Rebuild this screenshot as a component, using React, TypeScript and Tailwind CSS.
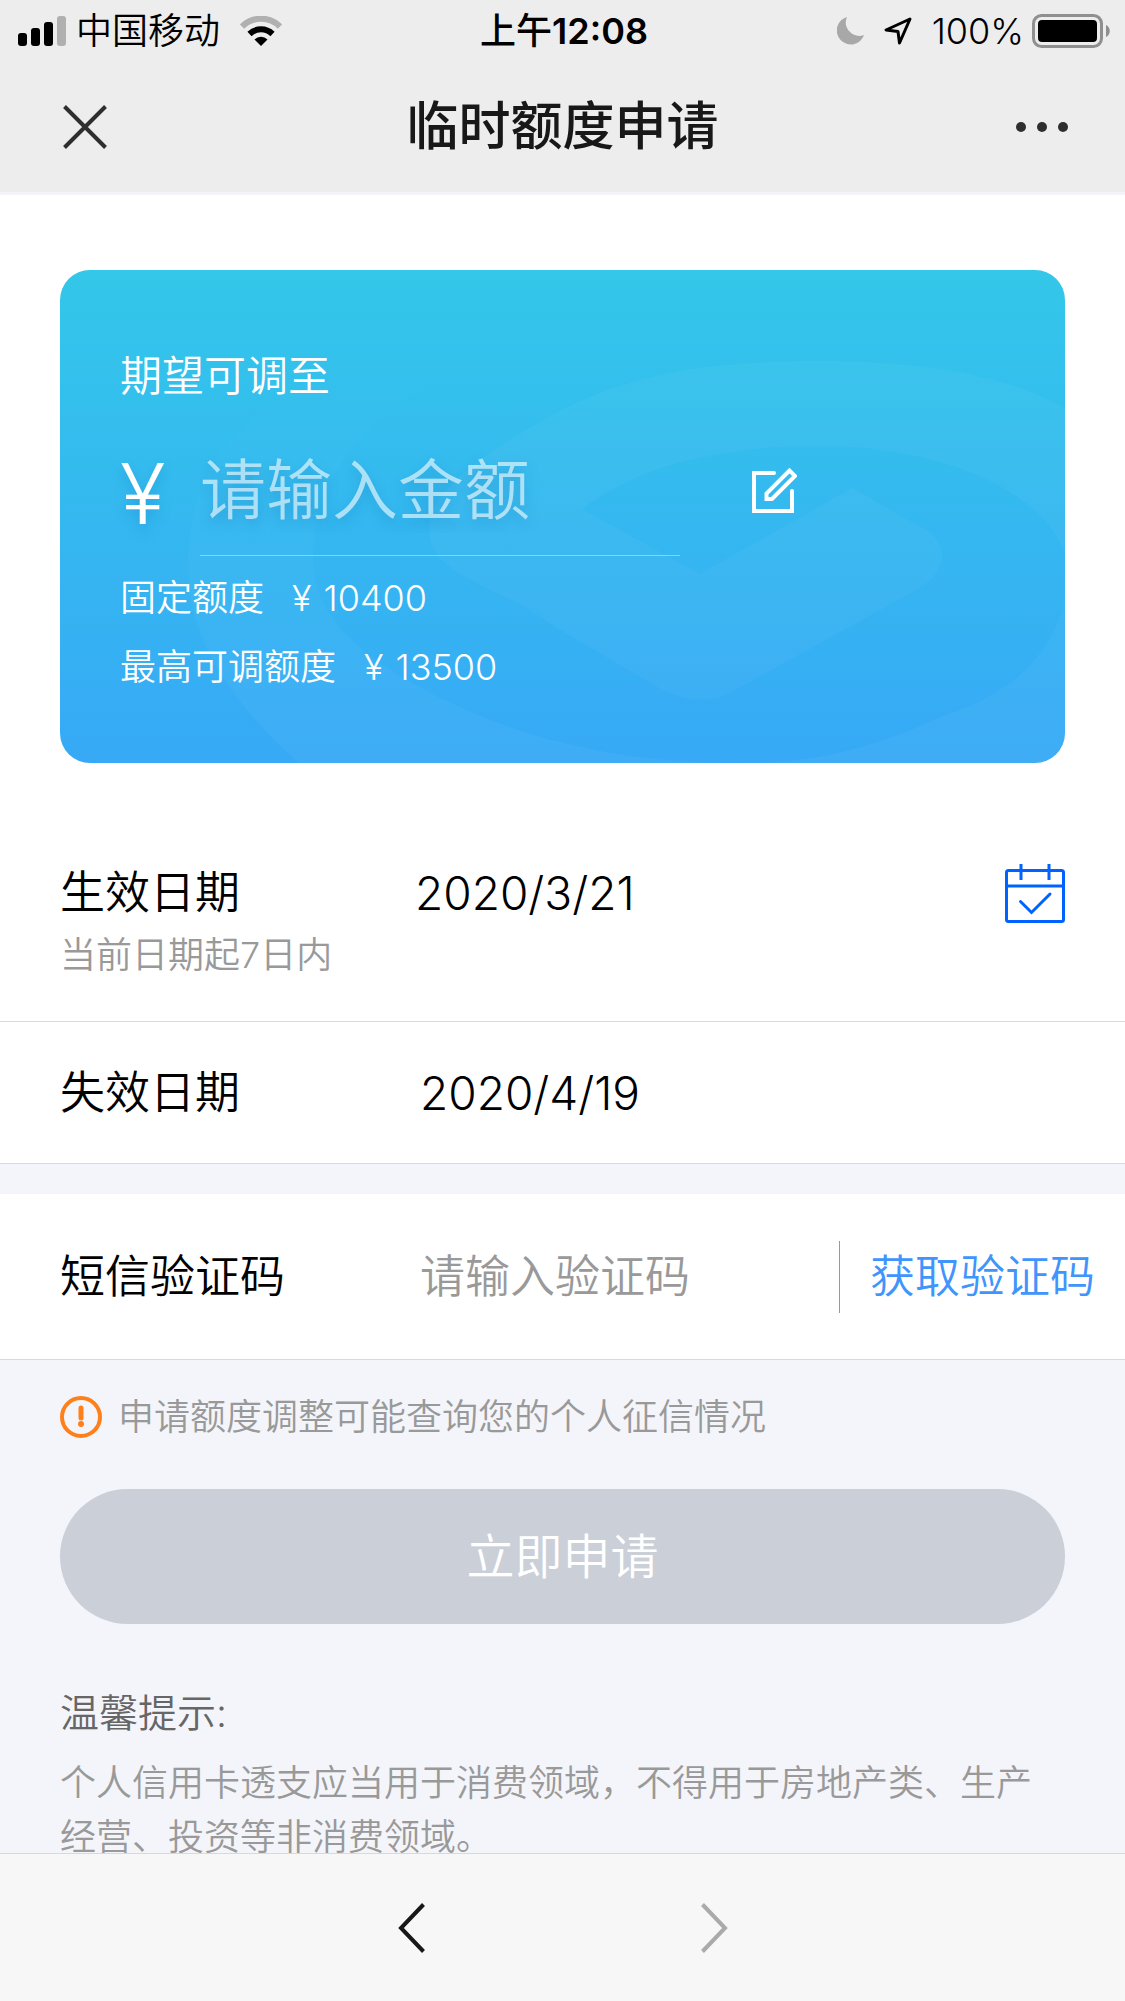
import React, { useState } from "react";

const SignalIcon = () => (
  <svg width="48" height="30" viewBox="0 0 48 30" aria-hidden="true">
    <rect x="0" y="17" width="9" height="13" rx="3" />
    <rect x="13" y="12" width="9" height="18" rx="3" />
    <rect x="26" y="6" width="9" height="24" rx="3" />
    <rect x="39" y="0" width="9" height="30" rx="3" fill="#b0b0b0" />
  </svg>
);

const WifiIcon = () => (
  <svg width="42" height="30" viewBox="0 0 42 30" aria-hidden="true">
    <path d="M2 10.5 A27 27 0 0 1 40 10.5" fill="none" stroke="#b0b0b0" strokeWidth="6" />
    <path d="M9.5 18 A16.5 16.5 0 0 1 32.5 18" fill="none" stroke="#000" strokeWidth="6" />
    <path d="M21 30 L14.5 23.4 A9.5 9.5 0 0 1 27.5 23.4 Z" />
  </svg>
);

const BatteryIcon = () => (
  <svg width="78" height="34" viewBox="0 0 78 34" aria-hidden="true">
    <rect x="1.5" y="1.5" width="68" height="31" rx="8" fill="none" stroke="#8f8f8f" strokeWidth="3" />
    <rect x="6" y="6" width="59" height="22" rx="4" />
    <path d="M74 11 C79 13 79 21 74 23 Z" fill="#8f8f8f" />
  </svg>
);

const CardPattern = () => (
  <svg
    className="absolute inset-0 h-full w-full"
    viewBox="0 0 1005 493"
    preserveAspectRatio="none"
    aria-hidden="true"
  >
    <defs>
      <linearGradient id="swoosh" x1="0" y1="0" x2="0" y2="1">
        <stop offset="0" stopColor="#fff" stopOpacity="0" />
        <stop offset="0.5" stopColor="#fff" stopOpacity="0.025" />
        <stop offset="1" stopColor="#fff" stopOpacity="0.04" />
      </linearGradient>
    </defs>
    <path
      fill="url(#swoosh)"
      d="M440 80 C340 80 260 100 209 135 C150 178 128 230 128 300 C128 375 180 440 239 493 H1005 V328 C990 400 930 432 878 448 C800 485 740 493 680 493 C560 493 470 470 391 433 C300 390 253 345 253 290 C253 210 300 135 440 80 Z"
    />
    <path
      fill="#fff"
      fillOpacity="0.035"
      d="M1005 139 C950 105 860 91 760 91 C640 91 560 105 480 152 C410 192 369 225 369 260 C369 290 395 304 462 335 L500 360 L601 419 C630 433 655 433 677 419 L860 318 C888 300 888 275 868 261 L792 218 L640 304 L522 239 C580 195 660 176 759 176 C890 176 985 225 1005 284 Z"
    />
  </svg>
);

const EditIcon = () => (
  <svg width="45" height="45" viewBox="0 0 45 45" fill="none" stroke="#fff" strokeWidth="4" aria-hidden="true">
    <path d="M22 5 H2 V43 H40 V23" strokeLinecap="round" />
    <path d="M14.5 31 V25.5 L37.5 2.5 L43 8 L20 31 Z" strokeWidth="4" />
  </svg>
);

const CalendarIcon = () => (
  <svg width="60" height="60" viewBox="0 0 60 60" fill="none" stroke="#0062ff" strokeWidth="3" aria-hidden="true">
    <rect x="1.5" y="7.5" width="57" height="51" rx="2" />
    <path d="M2 23 H58 M16 1 V17 M44 1 V17" />
    <path d="M15.5 38.5 L26.5 49.5 L45 31" strokeLinecap="round" />
  </svg>
);

const WarnIcon = () => (
  <svg width="42" height="42" viewBox="0 0 42 42" className="shrink-0" aria-hidden="true">
    <circle cx="21" cy="21" r="19" fill="none" stroke="#ff7f1a" strokeWidth="4" />
    <path d="M21 12 V22" stroke="#ff7f1a" strokeWidth="5" strokeLinecap="round" />
    <circle cx="21" cy="28" r="3" fill="#ff7f1a" />
  </svg>
);

type LimitProps = {
  label: string;
  value: number;
};

const LimitRow = ({ label, value }: LimitProps) => (
  <div className="flex text-4xl leading-[69px]">
    <span>{label}</span>
    <span className="ml-7">¥</span>
    <span className="ml-3">{value}</span>
  </div>
);

const App = () => {
  const [amount, setAmount] = useState("");
  const [code, setCode] = useState("");

  return (
    <div className="flex h-screen flex-col bg-[#f4f5fa] font-[Inter,'Noto_Sans_CJK_SC',sans-serif] font-[350] text-black">
      <header className="border-b-[3px] border-[#f4f4f8] bg-[#ededed]">
        <div className="grid h-[62px] grid-cols-[1fr_auto_1fr] items-center pr-[15px] pl-[18px] text-4xl">
          <div className="flex items-center">
            <SignalIcon />
            <span className="ml-[10px]">中国移动</span>
            <span className="ml-5">
              <WifiIcon />
            </span>
          </div>
          <div className="font-semibold">
            <span className="font-medium">上午</span>12:08
          </div>
          <div className="flex items-center justify-end">
            <svg width="27" height="28" viewBox="0 0 27 28" fill="#a8a8a8" aria-hidden="true">
              <path d="M10 0 A14 14 0 1 0 27 18 A13.5 13.5 0 0 1 10 0 Z" />
            </svg>
            <svg className="ml-5" width="28" height="28" viewBox="0 0 28 28" fill="none" stroke="#000" strokeWidth="3" strokeLinejoin="round" aria-hidden="true">
              <path d="M26 2 L2 13 L14 14.5 L15.5 26 Z" />
            </svg>
            <span className="ml-5">100%</span>
            <span className="ml-2">
              <BatteryIcon />
            </span>
          </div>
        </div>
        <div className="grid h-[130px] grid-cols-[1fr_auto_1fr] items-center px-14">
          <button type="button" aria-label="关闭" className="justify-self-start p-[7px]">
            <svg width="44" height="44" viewBox="0 0 44 44" stroke="#2e2e2e" strokeWidth="4" aria-hidden="true">
              <path d="M1.5 1.5 L42.5 42.5 M42.5 1.5 L1.5 42.5" />
            </svg>
          </button>
          <h1 className="text-[52px] font-medium text-[#181818]">临时额度申请</h1>
          <button type="button" aria-label="更多" className="justify-self-end">
            <svg width="54" height="10" viewBox="0 0 54 10" fill="#2e2e2e" aria-hidden="true">
              <circle cx="6" cy="5" r="5" />
              <circle cx="27" cy="5" r="5" />
              <circle cx="48" cy="5" r="5" />
            </svg>
          </button>
        </div>
      </header>

      <main className="min-h-0 flex-1 overflow-y-auto [scrollbar-width:none]">
        <section className="bg-white px-[60px] py-[75px]">
          <div className="relative overflow-hidden rounded-[30px] bg-linear-to-b from-[#33c7e9] to-[#37a9f6] px-[60px] pt-[76px] pb-[61px] text-white">
            <CardPattern />
            <div className="relative">
              <label htmlFor="amount" className="block text-[42px] leading-[60px]">
                期望可调至
              </label>
              <div className="mt-[18px] flex items-center">
                <span className="w-20 self-end text-[84px] leading-[124px] [text-shadow:0_6px_12px_rgba(20,120,190,0.35)]">¥</span>
                <input
                  id="amount"
                  value={amount}
                  onChange={(e) => setAmount(e.target.value)}
                  placeholder="请输入金额"
                  className="h-[132px] w-[480px] border-b border-white/40 bg-transparent text-[66px] outline-none placeholder:text-white/60 [text-shadow:0_6px_12px_rgba(20,120,190,0.35)]"
                />
                <button type="button" aria-label="编辑" className="ml-[72px]">
                  <EditIcon />
                </button>
              </div>
              <div className="mt-2">
                <LimitRow label="固定额度" value={10400} />
                <LimitRow label="最高可调额度" value={13500} />
              </div>
            </div>
          </div>
        </section>

        <section className="bg-white text-[45px]">
          <div className="flex h-[184px] items-start border-b border-[#d9d9d9] px-[60px] pt-[25px]">
            <div className="w-[355px]">
              <div className="leading-[60px]">生效日期</div>
              <div className="mt-[6px] text-4xl leading-[52px] text-[#999]">当前日期起7日内</div>
            </div>
            <div className="flex-1 text-[46px] leading-[60px]">2020/3/21</div>
            <button type="button" aria-label="选择日期">
              <CalendarIcon />
            </button>
          </div>
          <div className="flex h-[142px] items-center border-b border-[#d9d9d9] px-[60px]">
            <div className="w-[360px]">失效日期</div>
            <div className="text-[46px] leading-[60px]">2020/4/19</div>
          </div>
        </section>

        <section className="mt-[30px] flex h-[166px] items-center border-b border-[#d9d9d9] bg-white pr-[30px] pl-[60px] text-[45px]">
          <label htmlFor="code" className="w-[360px]">
            短信验证码
          </label>
          <input
            id="code"
            value={code}
            onChange={(e) => setCode(e.target.value)}
            placeholder="请输入验证码"
            className="min-w-0 flex-1 bg-transparent outline-none placeholder:text-[#999]"
          />
          <button type="button" className="h-[72px] border-l border-[#999] pl-[30px] leading-[72px] text-[#4095fc]">
            获取验证码
          </button>
        </section>

        <section className="px-[60px] pt-[30px]">
          <div className="flex items-center gap-4 text-4xl leading-[54px] text-[#999]">
            <WarnIcon />
            <p className="flex-1">申请额度调整可能查询您的个人征信情况</p>
          </div>
          <button type="button" className="mt-[45px] h-[135px] w-full rounded-full bg-[#cbcfd8] text-5xl text-white">
            立即申请
          </button>
          <h2 className="mt-[62px] text-[39px] leading-[54px] text-[#666]">温馨提示:</h2>
          <p className="mt-4 text-4xl leading-[54px] text-[#999]">
            个人信用卡透支应当用于消费领域，不得用于房地产类、生产经营、投资等非消费领域。
          </p>
        </section>
      </main>

      <nav className="flex h-[148px] items-center justify-center gap-[276px] border-t border-[#d9d9d9] bg-[#f7f7f7]">
        <button type="button" aria-label="后退">
          <svg width="27" height="50" viewBox="0 0 27 50" fill="none" stroke="#181818" strokeWidth="4" aria-hidden="true">
            <path d="M25.5 1.5 L3 25 L25.5 48.5" />
          </svg>
        </button>
        <button type="button" aria-label="前进" disabled>
          <svg width="27" height="50" viewBox="0 0 27 50" fill="none" stroke="#aaa" strokeWidth="4" aria-hidden="true">
            <path d="M1.5 1.5 L24 25 L1.5 48.5" />
          </svg>
        </button>
      </nav>
    </div>
  );
};

export default App;
